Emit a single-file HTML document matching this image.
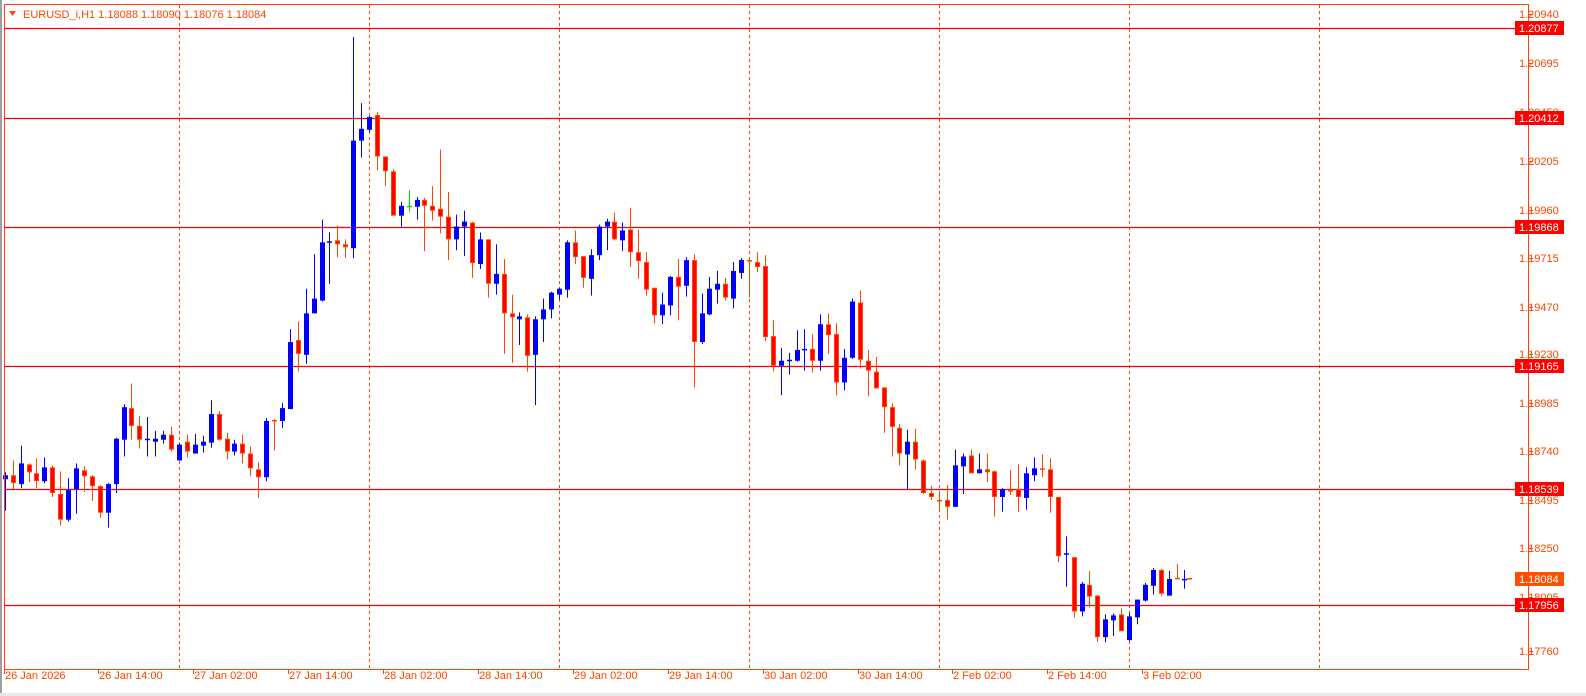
<!DOCTYPE html>
<html><head><meta charset="utf-8"><style>
html,body{margin:0;padding:0;background:#fff;width:1586px;height:696px;overflow:hidden}
svg{display:block}
text{font-family:"Liberation Sans",sans-serif;font-size:11px}
</style></head><body>
<svg id="s" width="1586" height="696" xmlns="http://www.w3.org/2000/svg">
<rect x="0" y="0" width="1586" height="696" fill="#fff"/>
<rect x="0" y="0" width="2" height="696" fill="#a0a0a0"/>
<rect x="0" y="693" width="1586" height="3" fill="#e8e8e8"/>
<g id="grid" stroke="#ff4500" stroke-width="1" stroke-dasharray="3,3"></g>
<g id="hl" stroke="#ff0000" stroke-width="1.2"></g>
<g id="c"></g>
<rect x="4.5" y="4.5" width="1524" height="665" fill="none" stroke="#ff4500" stroke-width="1"/>
<path d="M9 11 L16 11 L12.5 16 Z" fill="#ff4500"/>
<text x="23" y="18" fill="#ff4500">EURUSD_i,H1  1.18088 1.18090 1.18076 1.18084</text>
<g id="ax" fill="#ff4500"></g>
</svg>
<script>
var NS="http://www.w3.org/2000/svg";
function el(p,t,a,txt){var e=document.createElementNS(NS,t);for(var k in a)e.setAttribute(k,a[k]);if(txt)e.textContent=txt;document.getElementById(p).appendChild(e);return e;}
[179,369,559,749,939,1129,1319].forEach(function(x){el("grid","line",{x1:x+.5,y1:5,x2:x+.5,y2:669});});
var lv=[[28,"1.20877"],[118,"1.20412"],[227,"1.19868"],[366,"1.19165"],[489,"1.18539"],[605,"1.17956"]];
lv.forEach(function(l){el("hl","line",{x1:5,y1:l[0]+.5,x2:1529,y2:l[0]+.5});});
var pl=[[14,"1.20940"],[63,"1.20695"],[112,"1.20450"],[161,"1.20205"],[210,"1.19960"],[258,"1.19715"],[307,"1.19470"],[354,"1.19230"],[403,"1.18985"],[451,"1.18740"],[500,"1.18495"],[548,"1.18250"],[597,"1.18005"],[651,"1.17760"]];
pl.forEach(function(p){el("ax","rect",{x:1529,y:p[0],width:4,height:1});el("ax","text",{x:1519,y:p[0]+4},p[1]);});
lv.forEach(function(l){el("ax","rect",{x:1515,y:l[0]-7,width:49,height:14,fill:"#ff0000"});el("ax","text",{x:1519,y:l[0]+4,fill:"#fff"},l[1]);});
el("ax","rect",{x:1515,y:572,width:49,height:14,fill:"#ff4f00"});el("ax","text",{x:1519,y:583,fill:"#fff"},"1.18084");
var tl=[[5,"26 Jan 2026"],[99,"26 Jan 14:00"],[194,"27 Jan 02:00"],[289,"27 Jan 14:00"],[384,"28 Jan 02:00"],[479,"28 Jan 14:00"],[574,"29 Jan 02:00"],[669,"29 Jan 14:00"],[764,"30 Jan 02:00"],[859,"30 Jan 14:00"],[953,"2 Feb 02:00"],[1048,"2 Feb 14:00"],[1143,"3 Feb 02:00"]];
tl.forEach(function(t){el("ax","rect",{x:t[0]-1,y:670,width:1,height:4});el("ax","text",{x:t[0],y:679},t[1]);});
// x_mine, hi, top, bot, lo, color(b/r/g)
var D=[
[6,478,481,485,517,'b'],[13,466,481,489,495,'r'],[21,451,469,490,494,'b'],[29,469,470,478,488,'r'],[37,464,479,487,494,'r'],[45,463,473,487,489,'b'],[53,471,473,499,503,'r'],[61,477,500,526,532,'r'],[69,484,496,526,528,'b'],[77,469,474,495,520,'b'],[85,472,476,482,498,'r'],[93,481,482,492,507,'r'],[101,491,492,519,524,'r'],[109,489,490,519,534,'b'],[117,443,444,490,499,'b'],[125,409,412,445,462,'b'],[133,388,413,431,445,'r'],[141,421,431,445,454,'r'],[149,422,444,446,462,'b'],[157,436,444,447,462,'b'],[165,436,440,445,449,'b'],[173,432,440,455,457,'r'],[181,448,450,466,466,'b'],[189,440,447,457,463,'r'],[197,439,450,459,459,'b'],[205,441,447,451,458,'b'],[213,405,419,448,453,'b'],[221,416,419,445,446,'r'],[229,438,444,457,465,'r'],[237,445,449,457,461,'b'],[245,440,449,459,469,'r'],[253,452,459,474,482,'r'],[261,468,475,483,504,'r'],[269,423,426,483,487,'b'],[277,424,425,427,456,'r'],[285,408,413,426,433,'b'],
[293,333,346,414,414,'b'],[301,325,344,358,376,'r'],[309,292,317,359,368,'b'],[317,257,302,317,317,'b'],[325,222,245,304,305,'b'],[333,235,244,246,287,'b'],[341,228,243,247,260,'r'],[349,242,247,250,261,'r'],[357,37,142,251,261,'b'],[365,104,130,142,159,'b'],[373,117,118,131,133,'b'],[381,113,116,158,172,'r'],[389,158,158,173,188,'r'],[397,171,173,218,218,'r'],[405,204,208,218,229,'b'],[413,192,208,209,214,'g'],[421,199,202,209,222,'b'],[429,200,202,208,254,'r'],[437,188,208,213,223,'r'],[445,151,211,219,236,'r'],[453,194,219,242,263,'r'],[461,217,229,242,253,'b'],[469,213,224,229,259,'b'],[477,224,225,266,281,'r'],[485,235,242,267,272,'b'],[493,242,242,287,301,'r'],[501,247,277,287,298,'b'],[509,262,277,317,358,'r'],[517,298,317,321,367,'r'],[525,316,320,323,349,'b'],[533,318,321,360,376,'r'],[541,320,323,359,410,'b'],[549,302,313,323,346,'b'],[557,295,296,313,322,'b'],[565,291,292,298,303,'b'],
[573,243,245,293,301,'b'],[581,233,245,260,267,'r'],[589,259,259,281,291,'r'],[597,252,258,282,299,'b'],[605,227,229,258,263,'b'],[613,221,224,229,253,'b'],[621,215,224,242,243,'r'],[629,225,233,243,254,'b'],[637,210,232,255,270,'r'],[645,232,255,264,282,'r'],[653,255,265,293,299,'r'],[661,291,291,319,327,'r'],[669,296,308,319,328,'b'],[677,279,280,309,319,'b'],[685,262,280,290,324,'r'],[693,260,263,289,300,'b'],[701,257,263,346,392,'r'],[709,297,317,346,348,'b'],[717,280,292,318,319,'b'],[725,274,287,293,307,'b'],[733,281,287,301,304,'r'],[741,265,274,302,312,'b'],[749,261,263,276,282,'b'],[757,261,263,265,301,'r'],[765,255,265,270,275,'r'],[773,258,269,341,345,'r'],[781,324,340,370,376,'r'],[789,352,365,370,400,'b'],[797,357,364,365,379,'b'],[805,334,354,365,366,'b'],[813,333,353,355,375,'b'],[821,338,353,365,377,'r'],[829,318,328,365,375,'b'],[837,317,328,339,358,'r'],[845,327,338,387,400,'r'],[853,353,362,387,395,'b'],[861,302,305,362,363,'b'],
[869,294,306,364,373,'r'],[877,354,365,375,401,'r'],[885,361,376,393,393,'r'],[893,392,392,412,438,'r'],[901,408,412,432,462,'r'],[909,429,433,459,471,'r'],[917,435,447,460,495,'b'],[925,434,447,465,475,'r'],[933,465,466,499,500,'r'],[941,492,499,503,506,'r'],[949,500,506,507,517,'r'],[957,491,506,513,526,'r'],[965,455,471,513,513,'b'],[973,459,462,472,500,'b'],[981,455,461,479,479,'r'],[989,459,475,479,479,'b'],[997,459,475,478,488,'r'],[1005,476,477,503,523,'r'],[1013,494,495,503,518,'b'],[1021,476,496,497,501,'r'],[1029,470,495,503,518,'r'],[1037,473,479,504,516,'b'],[1045,463,474,481,487,'b'],[1053,460,474,476,483,'r'],[1061,464,475,503,519,'r'],[1069,503,503,563,569,'r'],[1077,543,560,562,594,'b'],[1085,564,564,619,625,'r'],[1093,589,591,619,624,'b'],[1101,578,592,604,615,'r'],[1109,602,603,645,650,'r'],[1117,622,627,645,650,'b'],[1125,621,623,628,644,'b'],[1133,616,622,639,639,'r'],[1141,620,624,648,649,'b'],[1149,607,607,625,632,'b'],[1157,590,592,608,609,'b'],[1165,575,577,593,602,'b'],[1173,576,577,601,603,'r'],[1181,578,586,603,603,'b'],[1189,571,585,586,586,'r'],[1197,577,586,587,596,'b']
];
function Y(v){return 0.987*v+0.5;}
D.forEach(function(d){
 var n=Math.round((d[0]-181)/8);var x=Math.round(179+n*7.917);
 var c=d[5]=='b'?'#0000ff':(d[5]=='g'?'#00e000':'#ff4500');
 var hi=Y(d[1]),t=Y(d[2]),b=Y(d[3]),lo=Y(d[4]);
 el("c","rect",{x:x,y:hi,width:1,height:Math.max(1,lo-hi),fill:c});
 var h=b-t;
 if(h<2){el("c","rect",{x:x-2,y:t,width:5,height:1.5,fill:c});}
 else if(d[5]=='b'){el("c","rect",{x:x-2,y:t,width:5,height:h,fill:'#0000ff'});}
 else {el("c","rect",{x:x-1.5,y:t+.5,width:4,height:h-1,fill:'#ff0000',stroke:'#ff4500','stroke-width':1});}
});
// final small candle
el("c","rect",{x:1187,y:578,width:5,height:1.5,fill:'#ff4500'});
</script>
</body></html>
